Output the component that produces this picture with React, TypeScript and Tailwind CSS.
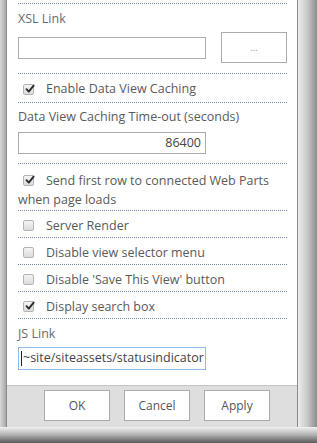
import React from "react";

const font = { fontFamily: '"Open Sans", "Liberation Sans", sans-serif' };

function Check({ checked }: { checked?: boolean }) {
  return (
    <span className="relative inline-flex h-[11px] w-[11px] shrink-0 items-center justify-center rounded-[2px] border border-[#b4b4b4] bg-gradient-to-b from-[#f4f4f4] to-[#dcdcdc]">
      {checked && (
        <svg width="10" height="10" viewBox="0 0 10 10" className="absolute left-[1px] top-[-1px]">
          <path d="M1.5 5.2 L3.8 7.6 L8.6 1.6" fill="none" stroke="#2b2b2b" strokeWidth="1.9" strokeLinecap="round" strokeLinejoin="round" />
        </svg>
      )}
    </span>
  );
}

function CheckRow({ label, checked }: { label: string; checked?: boolean }) {
  return (
    <div className="flex h-[27px] items-center gap-[12px] border-b border-dotted border-[#7486a3] pl-[5px] pt-[3px]">
      <Check checked={checked} />
      <span className="leading-[18px]">{label}</span>
    </div>
  );
}

function Btn({ children }: { children: React.ReactNode }) {
  return (
    <button className="flex h-[31px] w-[66px] items-center justify-center border border-[#ababab] bg-white text-[12px] text-[#555]">
      {children}
    </button>
  );
}

export default function App() {
  return (
    <div className="flex h-[443px] w-[317px] flex-col overflow-hidden bg-[#9a9a9a] text-[12.5px] text-[#5a5a5a]" style={font}>
      <div className="flex h-[427px]">
        {/* left shadow */}
        <div className="w-[6px] bg-gradient-to-r from-[#d8d8d8] to-[#a8a8a8]" />

        {/* panel */}
        <div className="flex w-[292px] flex-col border-x border-[#8a8a8a] bg-white">
          <div className="flex flex-1 flex-col pl-[11px] pr-[10px] pt-[3px]">
            {/* XSL Link */}
            <div className="border-y border-dotted border-[#7486a3] pb-[10px]">
              <div className="mt-[6px] leading-[18px] text-[#6a6a6a]">XSL Link</div>
              <div className="mt-[4px] flex items-center justify-between">
                <div className="h-[22px] w-[188px] border border-[#ababab] bg-white" />
                <button className="flex h-[31px] w-[66px] items-center justify-center border border-[#ababab] bg-white text-[9px] text-[#888]">
                  ...
                </button>
              </div>
            </div>

            {/* Enable caching */}
            <div className="flex items-center gap-[12px] border-b border-dotted border-[#7486a3] pb-[4px] pl-[5px] pt-[6px]">
              <Check checked />
              <span className="leading-[18px]">Enable Data View Caching</span>
            </div>

            {/* Time-out */}
            <div className="border-b border-dotted border-[#7486a3] pb-[9px]">
              <div className="mt-[5px] leading-[18px]">Data View Caching Time-out (seconds)</div>
              <div className="mt-[6px] flex h-[22px] w-[188px] items-center justify-end border border-[#ababab] bg-white pr-[4px] text-[#444]">
                86400
              </div>
            </div>

            {/* Send first row */}
            <div className="border-b border-dotted border-[#7486a3] pb-[1px] pt-[7px] leading-[19px]">
              <div className="flex items-center gap-[12px] pl-[5px]">
                <Check checked />
                <span>Send first row to connected Web Parts</span>
              </div>
              <div>when page loads</div>
            </div>

            <CheckRow label="Server Render" />
            <CheckRow label="Disable view selector menu" />
            <CheckRow label="Disable 'Save This View' button" />
            <CheckRow label="Display search box" checked />

            {/* JS Link */}
            <div>
              <div className="mt-[6px] leading-[18px] text-[#6a6a6a]">JS Link</div>
              <div className="mt-[4px] flex h-[23px] w-[188px] items-center overflow-hidden whitespace-nowrap border border-[#8fbde3] bg-white pl-[2px] text-[12.5px] text-[#444]">
                <span className="mr-[1px] h-[15px] w-px shrink-0 bg-[#222]" />
                ~site/siteassets/statusindicator
              </div>
            </div>
          </div>

          {/* footer */}
          <div className="flex h-[42px] gap-[14px] border-t border-[#c4c4c4] bg-[#dedede] pl-[37px] pt-[4px]">
            <Btn>OK</Btn>
            <Btn>Cancel</Btn>
            <Btn>Apply</Btn>
          </div>
        </div>

        {/* right shadow */}
        <div className="flex-1 bg-gradient-to-r from-[#ececec] via-[#c8c8c8] to-[#8c8c8c]" />
      </div>

      {/* bottom shadow */}
      <div className="h-[16px] bg-gradient-to-b from-[#f2f2f2] via-[#b0b0b0] to-[#5a5a5a]" />
    </div>
  );
}
